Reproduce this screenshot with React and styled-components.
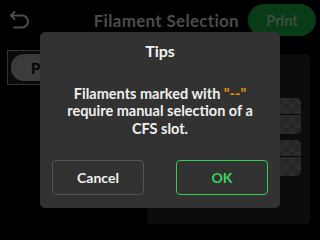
import React from "react";
import styled, { createGlobalStyle } from "styled-components";

const Global = createGlobalStyle`
  html, body { margin: 0; padding: 0; background: #000; }
  body { width: 320px; height: 240px; overflow: hidden; font-family: Lato, "Noto Sans", sans-serif; }
  #root { width: 320px; height: 240px; }
`;

const Screen = styled.div`
  position: relative;
  width: 320px;
  height: 240px;
  background: #000;
  overflow: hidden;
`;

const Header = styled.div`
  display: flex;
  align-items: center;
  height: 40px;
  padding: 0 4px 0 6px;
  box-sizing: border-box;
`;

const BackBtn = styled.div`
  width: 24px;
  height: 24px;
  display: flex;
  align-items: center;
  justify-content: center;
  margin-top: -2px;
`;

const Title = styled.div`
  flex: 1;
  text-align: right;
  padding-right: 9px;
  font-size: 17px;
  letter-spacing: 0.3px;
  font-weight: 700;
  color: #969696;
  margin-top: 1px;
`;

const PrintBtn = styled.div`
  width: 68px;
  height: 32px;
  border-radius: 16px;
  background: #10782f;
  color: #7f967f;
  font-size: 14.5px;
  font-weight: 700;
  display: flex;
  align-items: center;
  justify-content: center;
`;

const Body = styled.div`
  display: flex;
  padding: 10px 10px 0 7px;
`;

const LeftCol = styled.div`
  width: 140px;
`;

const TypeBox = styled.div`
  height: 35px;
  border: 1px solid #666;
  background: #141414;
  box-sizing: border-box;
  padding: 3px;
  display: flex;
`;

const TypePill = styled.div`
  width: 80px;
  border-radius: 13px;
  background: #777;
  color: #000;
  font-size: 15px;
  font-weight: 700;
  padding-left: 20px;
  display: flex;
  align-items: center;
`;

const Panel = styled.div`
  width: 163px;
  height: 170px;
  margin-top: 4px;
  background: #181818;
  border-radius: 4px;
  box-sizing: border-box;
  padding: 44px 9px 0 0;
  display: flex;
  flex-direction: column;
  align-items: flex-end;
  gap: 6px;
`;

const Tile = styled.div`
  position: relative;
  width: 60px;
  height: 36px;
  border-radius: 5px;
  background-color: #4c4c4c;
  background-image:
    linear-gradient(45deg, #585858 25%, transparent 25%, transparent 75%, #585858 75%),
    linear-gradient(45deg, #585858 25%, transparent 25%, transparent 75%, #585858 75%);
  background-size: 12px 12px;
  background-position: 0 0, 6px 6px;
  &::after {
    content: "";
    position: absolute;
    left: 0;
    right: 0;
    top: 16px;
    height: 1px;
    background: #111;
  }
`;

const Overlay = styled.div`
  position: absolute;
  inset: 0;
  background: rgba(0, 0, 0, 0.5);
  display: flex;
  justify-content: center;
  align-items: flex-start;
  padding-top: 32px;
  box-sizing: border-box;
`;

const Dialog = styled.div`
  width: 240px;
  height: 176px;
  background: #323232;
  border-radius: 5px;
  display: flex;
  flex-direction: column;
  align-items: center;
  box-sizing: border-box;
  padding: 9px 12px 13px;
`;

const DialogTitle = styled.div`
  font-size: 16px;
  font-weight: 700;
  color: #f2f2f2;
  line-height: 20px;
`;

const Message = styled.div`
  margin-top: 24px;
  font-size: 14.5px;
  font-weight: 700;
  color: #f0f0f0;
  line-height: 17.4px;
  text-align: center;
`;

const Mark = styled.span`
  color: #f08c00;
`;

const Buttons = styled.div`
  margin-top: auto;
  display: flex;
  gap: 32px;
  width: 100%;
`;

const DlgBtn = styled.div`
  flex: 1;
  height: 35px;
  box-sizing: border-box;
  border-radius: 4px;
  border: 1px solid ${(p) => (p.$primary ? "#2ed14f" : "#555")};
  color: ${(p) => (p.$primary ? "#3ad25c" : "#f0f0f0")};
  font-size: 14px;
  font-weight: 700;
  display: flex;
  align-items: center;
  justify-content: center;
`;

const BackIcon = () => (
  <svg width="24" height="24" viewBox="0 0 24 24" fill="none">
    <path d="M5 8.5 H16 A6 6 0 0 1 16 20.5 H8" stroke="#999" strokeWidth="2" strokeLinecap="round" />
    <path d="M8.5 5 L5 8.5 L8.5 12" stroke="#999" strokeWidth="2" strokeLinecap="round" strokeLinejoin="round" />
  </svg>
);

export default function App() {
  return (
    <Screen>
      <Global />
      <Header>
        <BackBtn>
          <BackIcon />
        </BackBtn>
        <Title>Filament Selection</Title>
        <PrintBtn>Print</PrintBtn>
      </Header>
      <Body>
        <LeftCol>
          <TypeBox>
            <TypePill>PLA</TypePill>
          </TypeBox>
        </LeftCol>
        <Panel>
          <Tile />
          <Tile />
        </Panel>
      </Body>
      <Overlay>
        <Dialog>
          <DialogTitle>Tips</DialogTitle>
          <Message>
            Filaments marked with <Mark>"--"</Mark>
            <br />
            require manual selection of a
            <br />
            CFS slot.
          </Message>
          <Buttons>
            <DlgBtn>Cancel</DlgBtn>
            <DlgBtn $primary>OK</DlgBtn>
          </Buttons>
        </Dialog>
      </Overlay>
    </Screen>
  );
}
